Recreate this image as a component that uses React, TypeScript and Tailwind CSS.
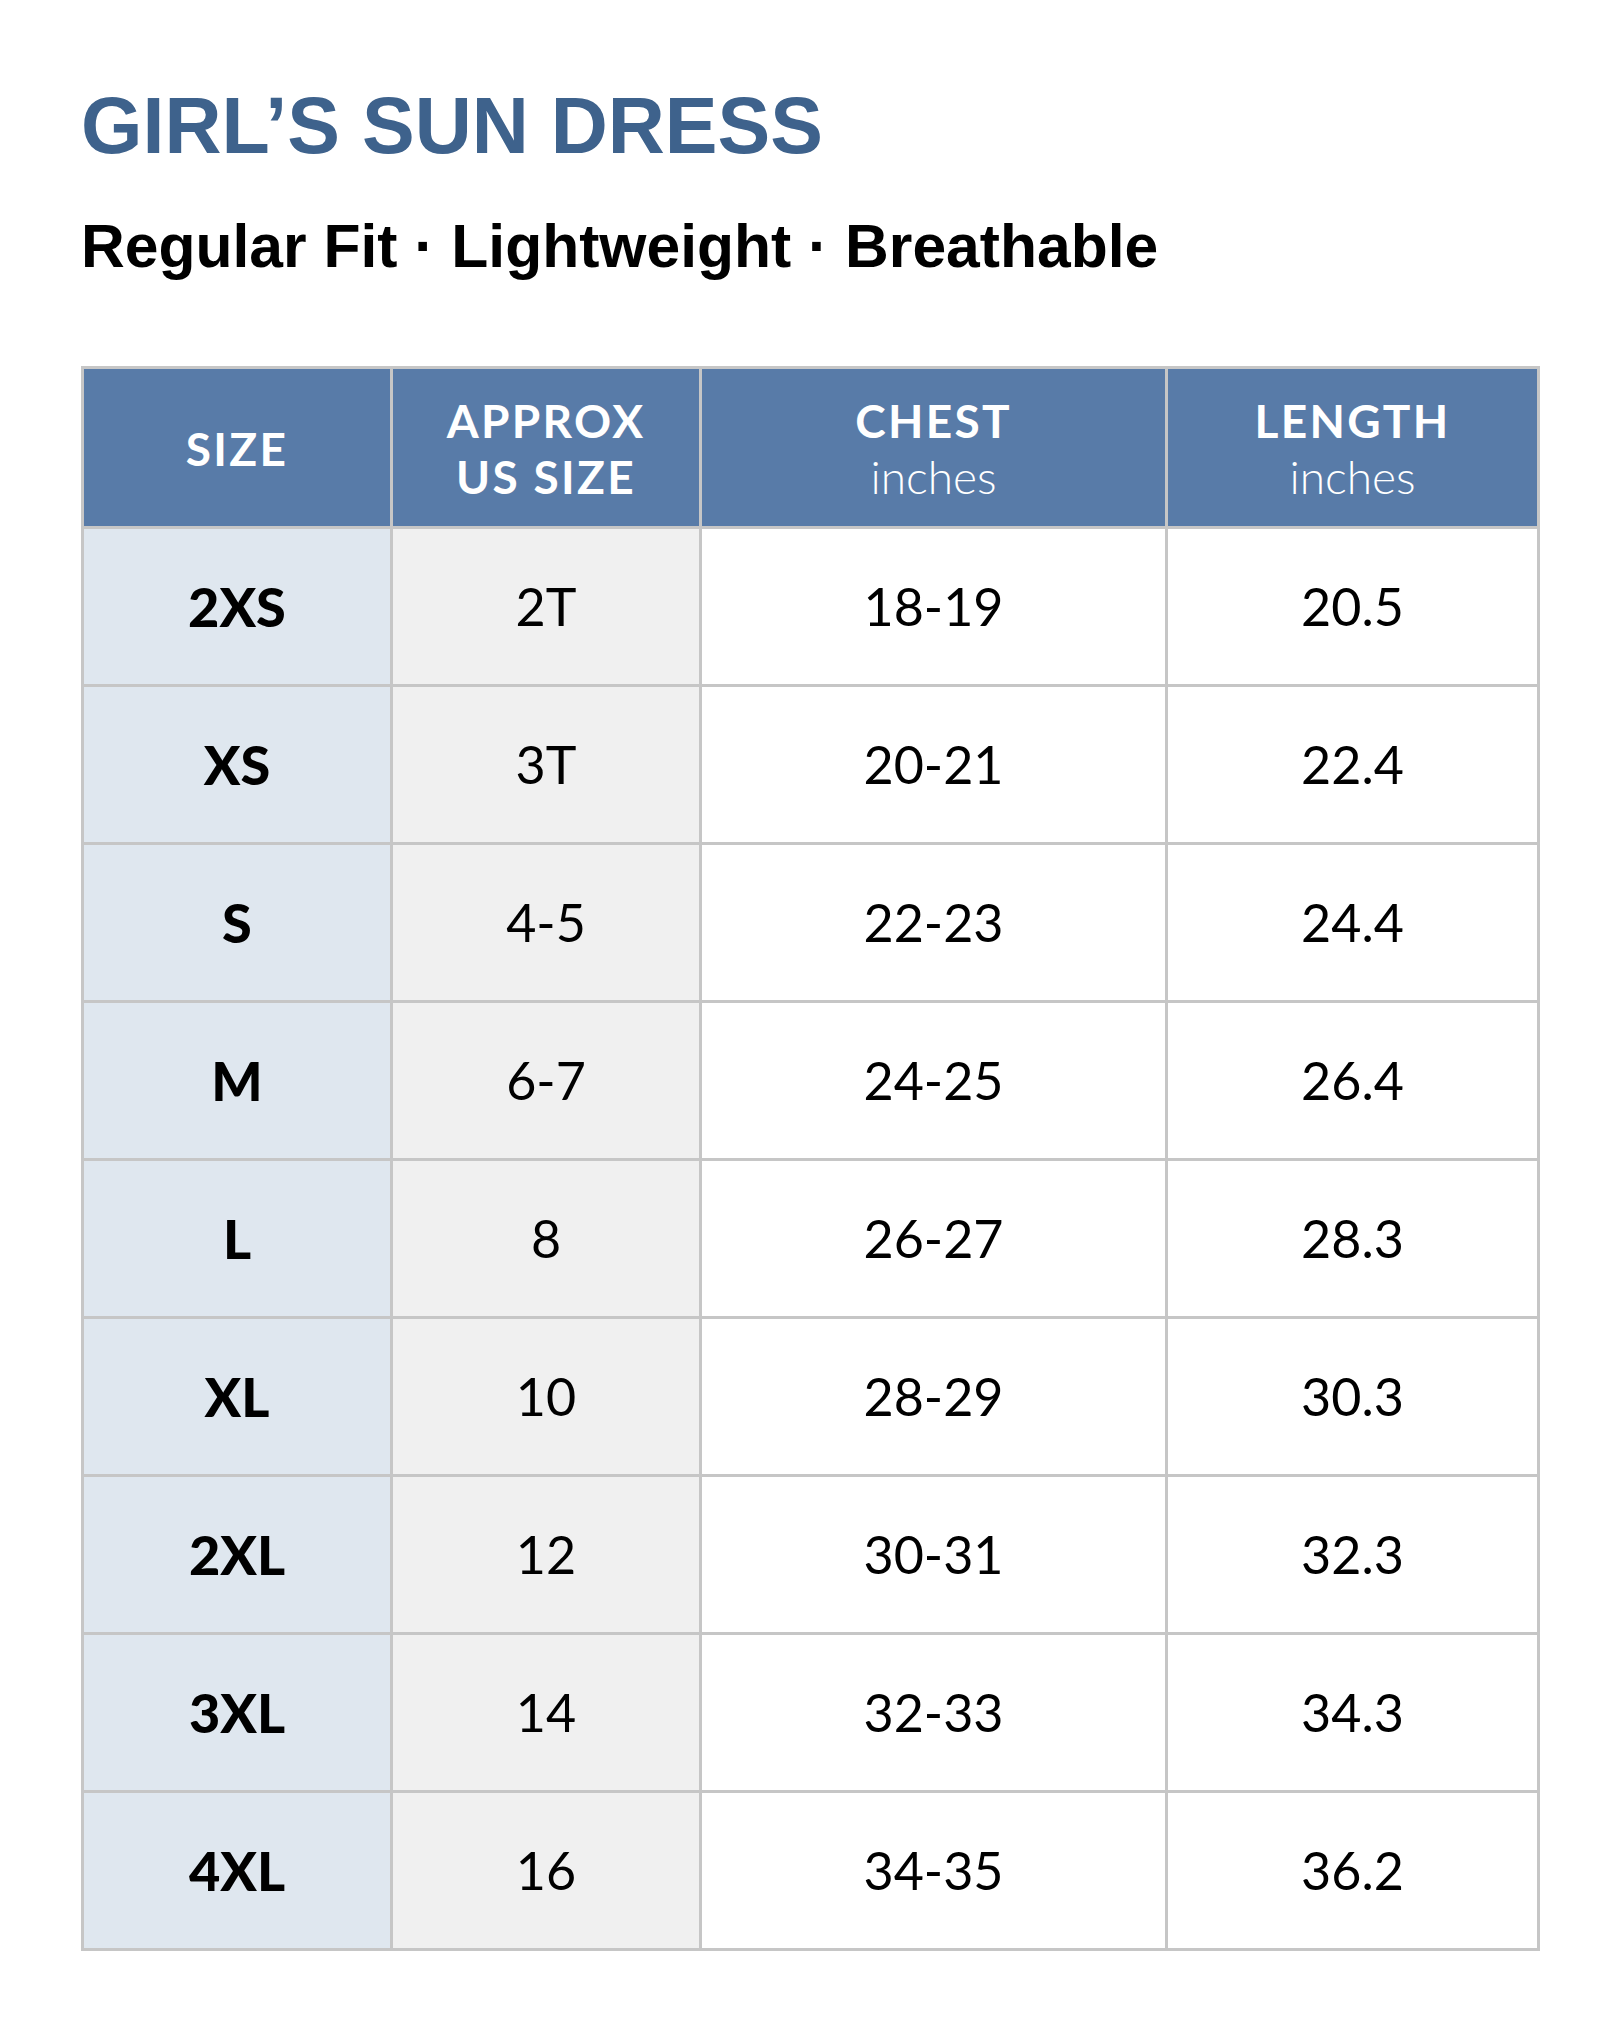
const rows = [
  ["2XS", "2T", "18-19", "20.5"],
  ["XS", "3T", "20-21", "22.4"],
  ["S", "4-5", "22-23", "24.4"],
  ["M", "6-7", "24-25", "26.4"],
  ["L", "8", "26-27", "28.3"],
  ["XL", "10", "28-29", "30.3"],
  ["2XL", "12", "30-31", "32.3"],
  ["3XL", "14", "32-33", "34.3"],
  ["4XL", "16", "34-35", "36.2"],
];

export default function App() {
  return (
    <div className="min-h-[2025px] w-[1620px] bg-white px-[81px] pt-[86px]">
      <h1 className="font-['Liberation_Sans',Arial,sans-serif] text-[79px] font-bold leading-none text-[#3e628c]">
        GIRL’S SUN DRESS
      </h1>
      <p className="mt-[51px] font-['Liberation_Sans',Arial,sans-serif] text-[60.6px] font-bold leading-none text-black">
        Regular Fit · Lightweight · Breathable
      </p>

      <div className="mt-[89px] grid w-[1459px] grid-cols-[306px_306px_463px_369px] grid-rows-[157px_repeat(9,155px)] gap-[3px] bg-[#c6c6c6] p-[3px] font-['Lato',sans-serif]">
        <div className="flex items-center justify-center bg-[#587ba8] pt-[3px] text-[46px] font-bold tracking-[0.05em] text-white">
          SIZE
        </div>
        <div className="flex flex-col items-center justify-center bg-[#587ba8] pt-[3px] text-[46px] font-bold leading-[56px] tracking-[0.05em] text-white">
          <span>APPROX</span>
          <span>US SIZE</span>
        </div>
        <div className="flex flex-col items-center justify-center bg-[#587ba8] pt-[3px] text-[46px] leading-[56px] text-white">
          <span className="font-bold tracking-[0.05em]">CHEST</span>
          <span className="font-light">inches</span>
        </div>
        <div className="flex flex-col items-center justify-center bg-[#587ba8] pt-[3px] text-[46px] leading-[56px] text-white">
          <span className="font-bold tracking-[0.05em]">LENGTH</span>
          <span className="font-light">inches</span>
        </div>

        {rows.map(([size, us, chest, length]) => (
          <div className="contents" key={size}>
            <div className="flex items-center justify-center bg-[#dfe7ef] text-[54px] font-black text-black">
              {size}
            </div>
            <div className="flex items-center justify-center bg-[#f0f0f0] text-[52px] text-black">
              {us}
            </div>
            <div className="flex items-center justify-center bg-white text-[52px] text-black">
              {chest}
            </div>
            <div className="flex items-center justify-center bg-white text-[52px] text-black">
              {length}
            </div>
          </div>
        ))}
      </div>
    </div>
  );
}
